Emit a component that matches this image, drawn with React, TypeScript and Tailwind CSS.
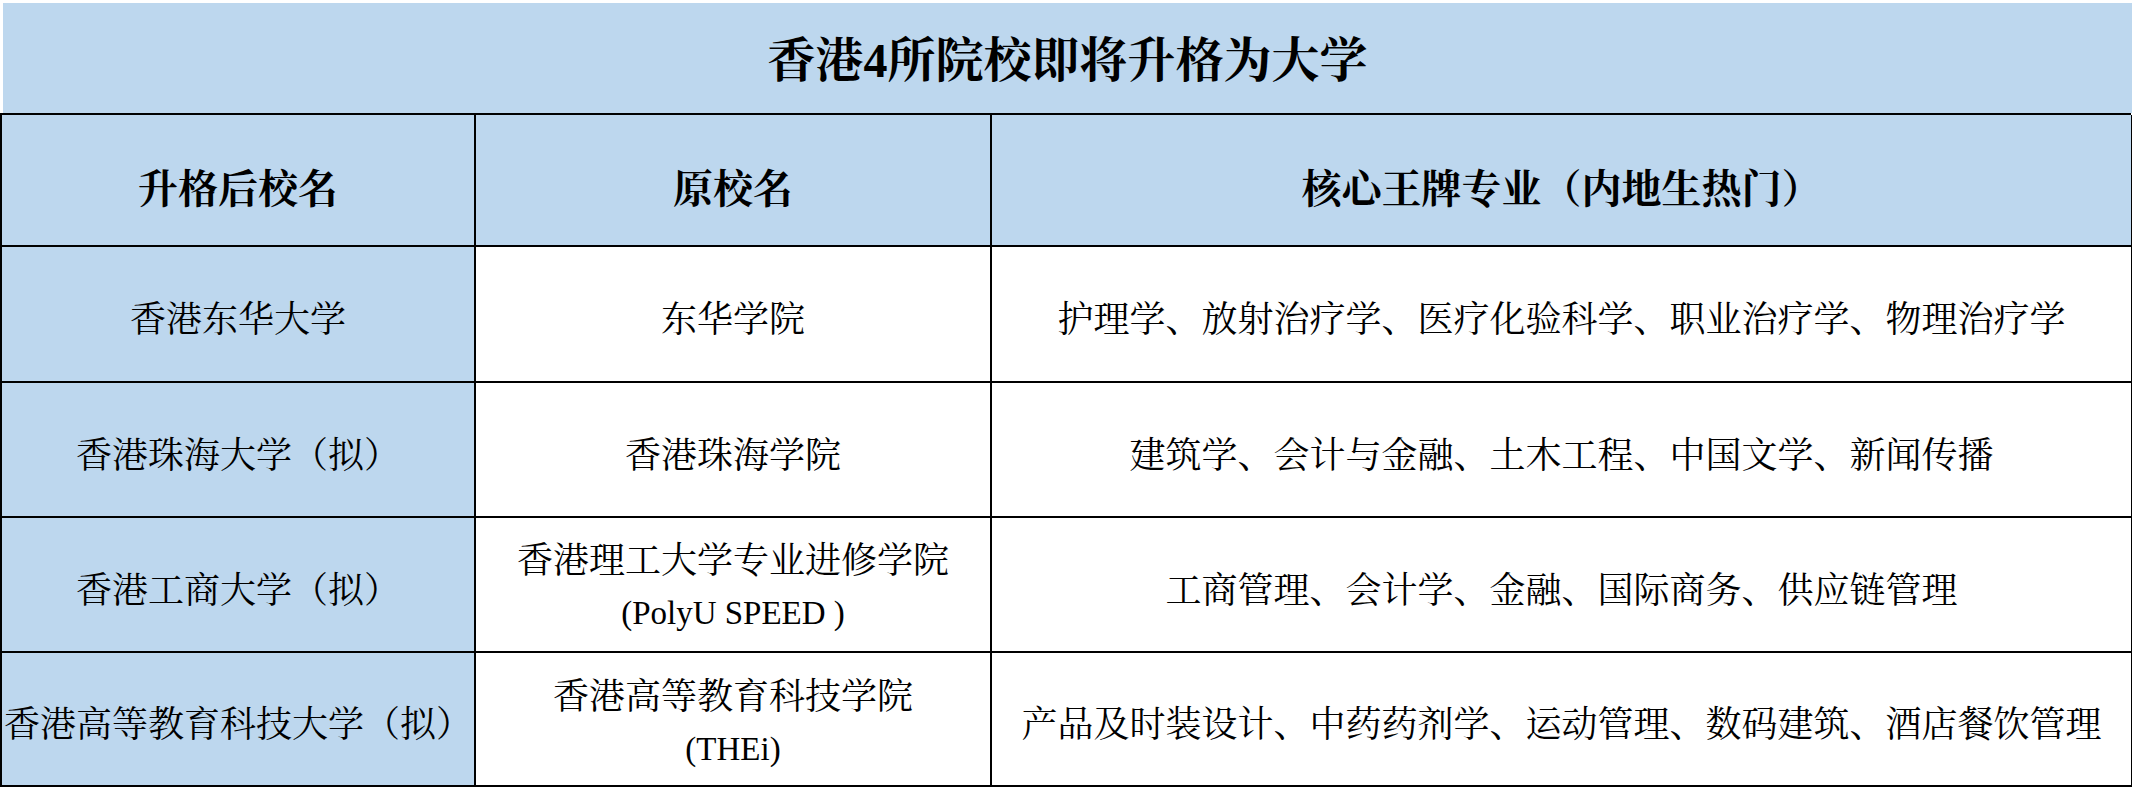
import React from "react";

const FONT = '"Liberation Serif", "Times New Roman", "Noto Serif CJK SC", "Noto Sans CJK SC", serif';
const LATIN = '"Liberation Serif", "Times New Roman", Tinos, "DejaVu Serif", serif';

const rows: { a: string; b: React.ReactNode; c: string; h: string; pb: string }[] = [
  { a: "香港东华大学", b: "东华学院", c: "护理学、放射治疗学、医疗化验科学、职业治疗学、物理治疗学", h: "h-[136px]", pb: "pt-[12px]" },
  { a: "香港珠海大学（拟）", b: "香港珠海学院", c: "建筑学、会计与金融、土木工程、中国文学、新闻传播", h: "h-[135px]", pb: "pt-[12px]" },
  {
    a: "香港工商大学（拟）",
    b: (
      <div className="flex flex-col items-center leading-[52px]">
        <span>香港理工大学专业进修学院</span>
        <span className="text-[33px] font-normal" style={{ fontFamily: LATIN }}>(PolyU SPEED )</span>
      </div>
    ),
    c: "工商管理、会计学、金融、国际商务、供应链管理",
    h: "h-[135px]",
    pb: "pt-[4px]",
  },
  {
    a: "香港高等教育科技大学（拟）",
    b: (
      <div className="flex flex-col items-center leading-[52px]">
        <span>香港高等教育科技学院</span>
        <span className="text-[33px] font-normal" style={{ fontFamily: LATIN }}>(THEi)</span>
      </div>
    ),
    c: "产品及时装设计、中药药剂学、运动管理、数码建筑、酒店餐饮管理",
    h: "h-[134px]",
    pb: "pt-[8px]",
  },
];

export default function App() {
  return (
    <div className="w-[2132px] h-[788px] bg-white text-black overflow-hidden" style={{ fontFamily: FONT }}>
      <div className="ml-[3px] mt-[3px] h-[110px] bg-[#bdd7ee] flex items-center justify-center pt-[6px]">
        <span className="text-[48px] font-bold">
          香港<span style={{ fontFamily: LATIN }}>4</span>所院校即将升格为大学
        </span>
      </div>
      <div className="w-[2131px] grid grid-cols-[474px_516px_1141px] border-l-2 border-t-2 border-black">
        <div className="h-[132px] bg-[#bdd7ee] border-r-2 border-b-2 border-black flex items-center justify-center text-[40px] font-bold pt-[20px]">
          升格后校名
        </div>
        <div className="h-[132px] bg-[#bdd7ee] border-r-2 border-b-2 border-black flex items-center justify-center text-[40px] font-bold pt-[20px]">
          原校名
        </div>
        <div className="h-[132px] bg-[#bdd7ee] border-r-2 border-b-2 border-black flex items-center justify-center text-[40px] font-bold pt-[20px]">
          核心王牌专业（内地生热门）
        </div>
        {rows.map((r, i) => (
          <React.Fragment key={i}>
            <div className={`${r.h} pt-[12px] bg-[#bdd7ee] border-r-2 border-b-2 border-black flex items-center justify-center text-[36px] whitespace-nowrap`}>
              {r.a}
            </div>
            <div className={`${r.h} ${r.pb} bg-white border-r-2 border-b-2 border-black flex items-center justify-center text-[36px] whitespace-nowrap`}>
              {r.b}
            </div>
            <div className={`${r.h} pt-[12px] bg-white border-r-2 border-b-2 border-black flex items-center justify-center text-[36px] whitespace-nowrap`}>
              {r.c}
            </div>
          </React.Fragment>
        ))}
      </div>
    </div>
  );
}
